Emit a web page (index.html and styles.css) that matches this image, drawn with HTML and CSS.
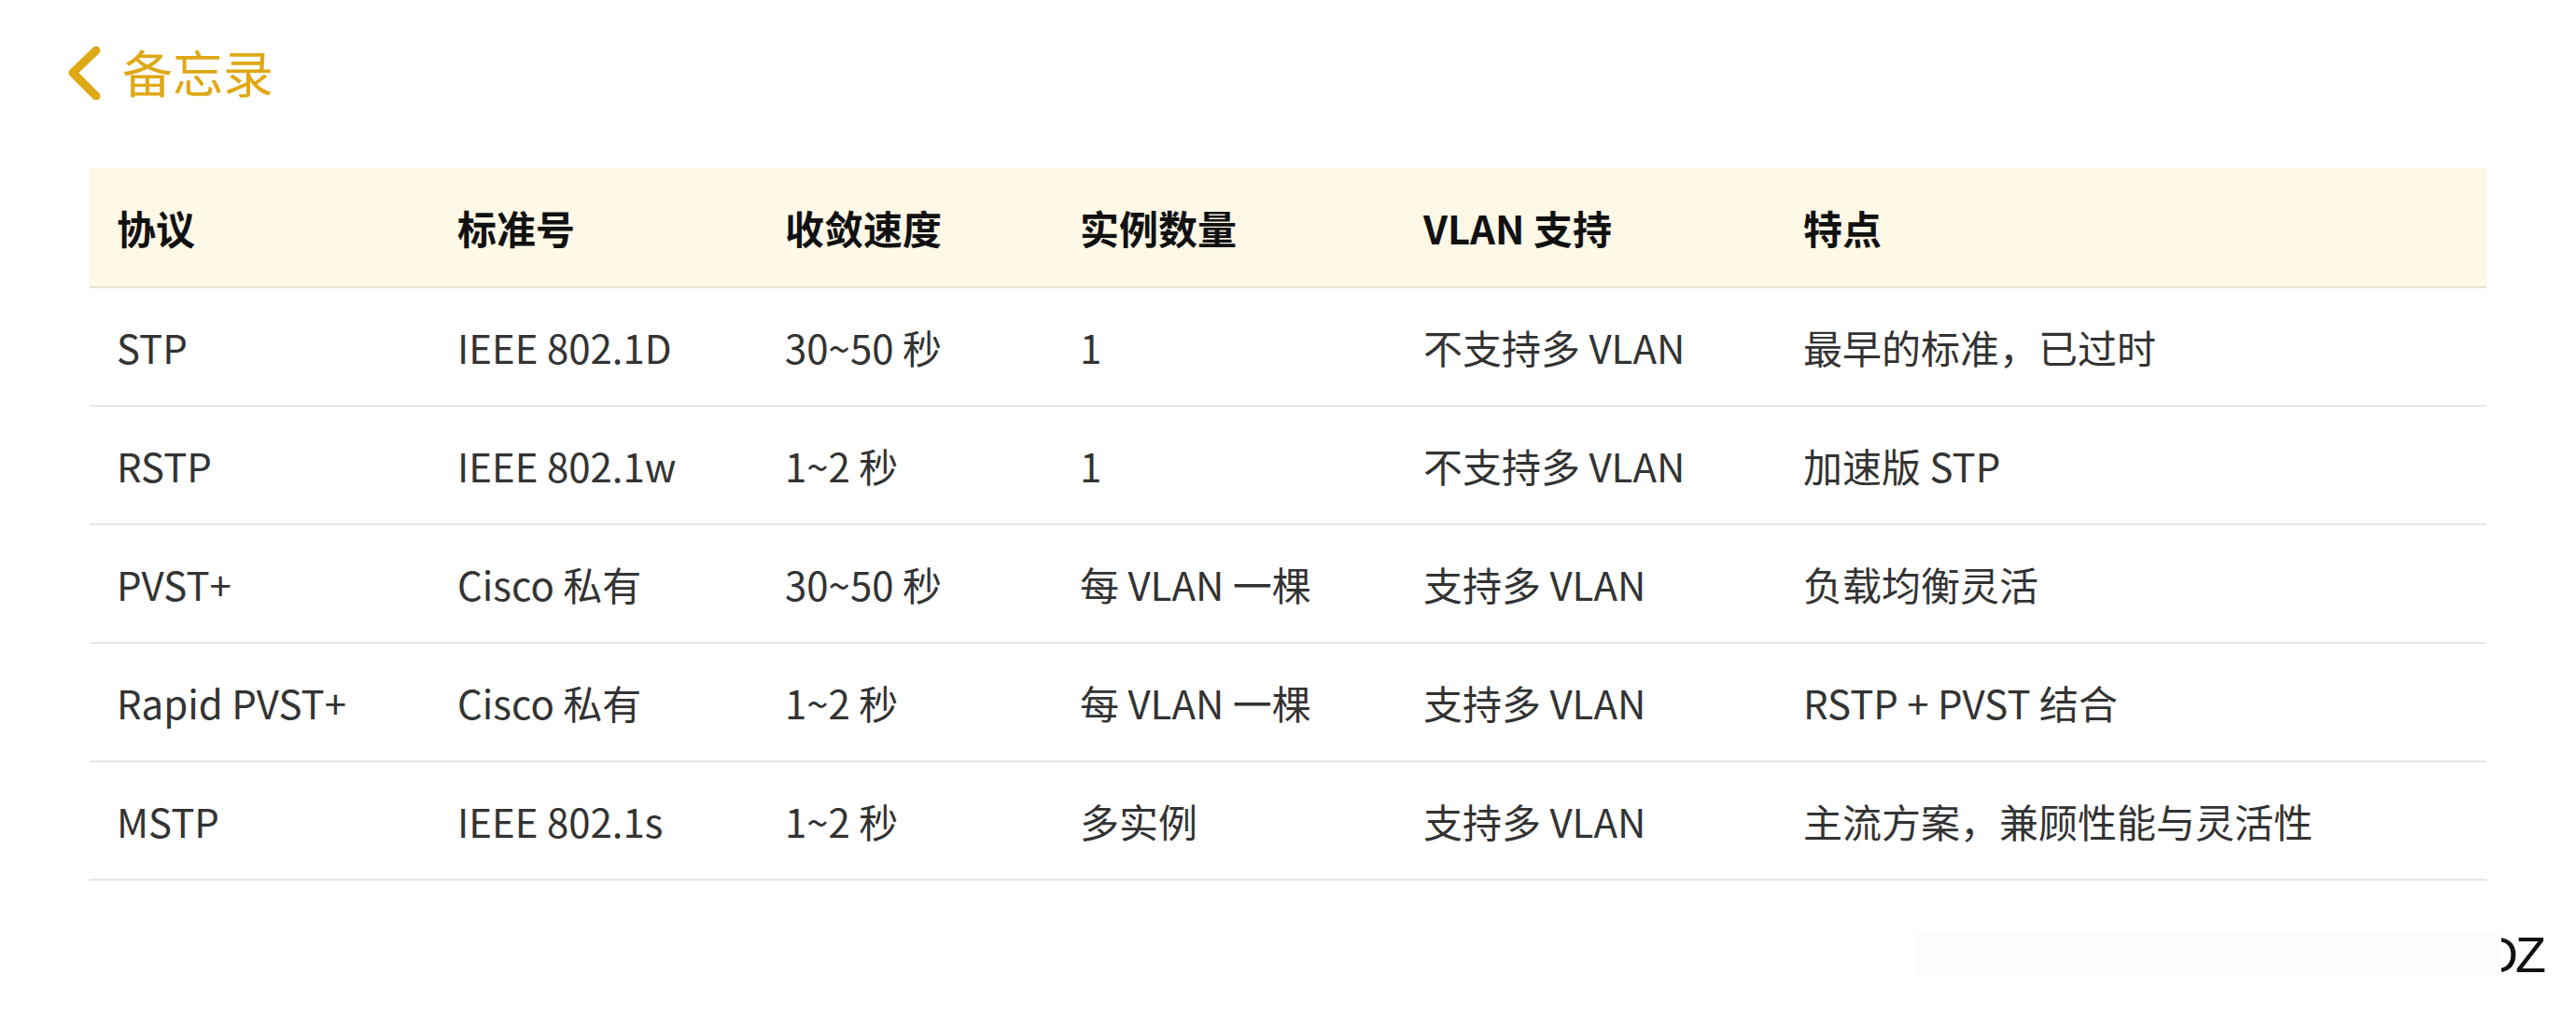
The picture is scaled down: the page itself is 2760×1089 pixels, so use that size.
FILE: index.html
```html
<!DOCTYPE html>
<html lang="zh-CN">
<head>
<meta charset="utf-8">
<title>备忘录</title>
<link rel="stylesheet" href="styles.css">
</head>
<body>
<div class="page">
  <header class="topbar">
    <svg class="back" width="40" height="60" viewBox="0 0 40 60" aria-hidden="true">
      <polyline points="35,7 10,31 35,56" fill="none" stroke="#dfa815" stroke-width="9" stroke-linecap="round" stroke-linejoin="round"/>
    </svg>
    <span class="title">备忘录</span>
  </header>

  <table class="grid">
    <colgroup>
      <col class="c1"><col class="c2"><col class="c3"><col class="c4"><col class="c5"><col class="c6">
    </colgroup>
    <thead>
      <tr><th>协议</th><th>标准号</th><th>收敛速度</th><th>实例数量</th><th>VLAN 支持</th><th>特点</th></tr>
    </thead>
    <tbody>
      <tr><td>STP</td><td>IEEE 802.1D</td><td>30~50 秒</td><td>1</td><td>不支持多 VLAN</td><td>最早的标准，已过时</td></tr>
      <tr><td>RSTP</td><td>IEEE 802.1w</td><td>1~2 秒</td><td>1</td><td>不支持多 VLAN</td><td>加速版 STP</td></tr>
      <tr><td>PVST+</td><td>Cisco 私有</td><td>30~50 秒</td><td>每 VLAN 一棵</td><td>支持多 VLAN</td><td>负载均衡灵活</td></tr>
      <tr><td>Rapid PVST+</td><td>Cisco 私有</td><td>1~2 秒</td><td>每 VLAN 一棵</td><td>支持多 VLAN</td><td>RSTP + PVST 结合</td></tr>
      <tr><td>MSTP</td><td>IEEE 802.1s</td><td>1~2 秒</td><td>多实例</td><td>支持多 VLAN</td><td>主流方案，兼顾性能与灵活性</td></tr>
    </tbody>
  </table>

  <div class="mark">
    <span class="mark-text">DZ</span>
    <span class="mark-cover"></span>
  </div>
</div>
</body>
</html>
```

FILE: styles.css
```css
html, body {
  margin: 0;
  padding: 0;
  background: #ffffff;
}

body {
  font-family: "Noto Sans CJK SC", "Noto Sans", sans-serif;
  color: #333333;
}

.page {
  position: relative;
  width: 2760px;
  height: 1089px;
  overflow: hidden;
}

.topbar {
  display: flex;
  align-items: center;
  height: 154px;
  padding-left: 68px;
  gap: 23px;
}

.back {
  display: block;
  flex: none;
}

.title {
  font-size: 54px;
  line-height: 54px;
  color: #dfa815;
}

.grid {
  margin-top: 26px;
  margin-left: 96px;
  width: 2568px;
  table-layout: fixed;
  border-collapse: separate;
  border-spacing: 0;
  font-size: 42px;
}

.c1 { width: 365px; }
.c2 { width: 351px; }
.c3 { width: 316px; }
.c4 { width: 368px; }
.c5 { width: 407px; }
.c6 { width: 761px; }

.grid th,
.grid td {
  text-align: left;
  vertical-align: middle;
  line-height: 57px;
  white-space: nowrap;
  padding: 34px 28px 34px 29px;
}

.grid th {
  background: #fef8e7;
  color: #111111;
  font-weight: 700;
  padding-top: 35px;
  padding-bottom: 35px;
  border-bottom: 2px solid #e8e2d4;
}

.grid td {
  color: #333333;
  font-weight: 400;
  border-bottom: 2px solid #e5e5e5;
}

.mark {
  position: absolute;
  left: 2040px;
  top: 990px;
  width: 700px;
  height: 70px;
}

.mark-text {
  position: absolute;
  right: 15px;
  top: 6px;
  font-family: "Liberation Sans", Arial, sans-serif;
  font-size: 54px;
  line-height: 54px;
  letter-spacing: -3px;
  color: #111111;
}

.mark-cover {
  position: absolute;
  left: 13px;
  top: 10px;
  width: 627px;
  height: 47px;
  background: #fcfcfc;
}
```
